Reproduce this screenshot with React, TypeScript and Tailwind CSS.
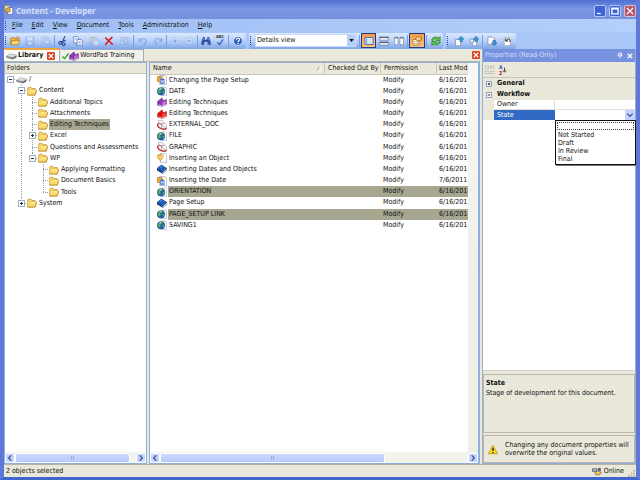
import type { ReactNode } from "react";

const UI = "font-['DejaVu_Sans_Condensed','DejaVu_Sans',Tahoma,sans-serif] text-[7px] leading-[9px] text-[#111]";

function Svg({ children, className = "h-[10px] w-[10px]", dim = false }: { children: ReactNode; className?: string; dim?: boolean }) {
  return (
    <svg viewBox="0 0 16 16" aria-hidden="true" className={`block shrink-0 ${className} ${dim ? "opacity-40" : ""}`}>
      {children}
    </svg>
  );
}

/* ---------- object icons ---------- */

function Folder() {
  return (
    <Svg>
      <path d="M1 13.5V3.5L2 2h4.5L8 4h5v3" fill="#f7d271" stroke="#b98a1c" />
      <path d="M1 14.5 4 6.5h11.5L13 14.5z" fill="#ffe48f" stroke="#c08f1e" />
      <path d="M1.5 6h11v7h-11z" fill="#fbd968" />
      <path d="M4.8 8h9" stroke="#fff8d8" />
      <path d="M1 14.5h12l2.500-7" fill="none" stroke="#b07c14" />
    </Svg>
  );
}

function Drive({ className = "h-[10px] w-[11px]" }: { className?: string }) {
  return (
    <Svg className={className}>
      <path d="M0 8 6 4.5l10 2.2v3L10 13 0 10.5z" fill="#8b8b8b" stroke="#666" strokeWidth=".6" />
      <path d="M0 8 6 4.5l10 2.2-6 3.4z" fill="#dadada" />
      <path d="M11 11.5l4-2" stroke="#333" strokeWidth="1.2" />
    </Svg>
  );
}

function WordDoc() {
  return (
    <Svg>
      <path d="M4.5.5h8l3 3v12h-11z" fill="#fff" stroke="#7a8db5" />
      <path d="M.5 2.5h8v8h-8z" fill="#e9a63c" stroke="#b77a1c" />
      <path d="M5 6h7v8H5z" fill="#3f6fd0" />
      <path d="M6 8l1.2 4L8.5 9l1.3 3L11 8" fill="none" stroke="#fff" />
    </Svg>
  );
}

function Globe() {
  return (
    <Svg>
      <path d="M8.5 1.5h5l2 2v12h-7z" fill="#fff" stroke="#8ba4c8" />
      <circle cx="6.500" cy="8.5" r="6.2" fill="#2a5cb0" stroke="#1b4b8c" strokeWidth=".6" />
      <path d="M3 5c2-3 5-3 6-2L8 6 5 7 6 10l-2 2C1.500 10 1 7.500 3 5z" fill="#58b84c" />
      <path d="M9 8l3-1c1 2-1 5-2.500 6z" fill="#49b04c" />
      <path d="M4 5l3-1.500" stroke="#d8f0e8" />
    </Svg>
  );
}

function ClosedBook({ kind }: { kind: "purple" | "red" }) {
  const face = kind === "purple" ? "#8f36b4" : "#e01414";
  const edge = kind === "purple" ? "#4e1268" : "#8d0606";
  return (
    <Svg>
      <path d="M1 7 8 1.500 10 6 15 4v8l-7 3-7-2z" fill={face} stroke={edge} strokeWidth=".8" />
      <path d="M8.500 8 14 6v5l-5.500 2.500z" fill={kind === "purple" ? "#b873d8" : "#f24a3c"} />
      <path d="M2 12.500l6 1.800 6.500-2.800" stroke="#fff" fill="none" />
    </Svg>
  );
}

function LinkedDoc() {
  return (
    <Svg>
      <path d="M2.500.5h6l3 3v9h-9z" fill="#f4f6fa" stroke="#9aa3b5" />
      <path d="M7.500 5.500h5l3 3v6h-8z" fill="#fff" stroke="#7a8498" />
      <path d="M1 6c-1 4 3 8 8 8.500h4l2-2" fill="none" stroke="#cc1f1f" strokeWidth="1.800" />
      <path d="M1 6.500C3 4 7 6 9 9" fill="none" stroke="#cc1f1f" strokeWidth="1.500" />
      <path d="M9.500 11h4" stroke="#888" />
    </Svg>
  );
}

function Shield() {
  return (
    <Svg>
      <path d="M5.500.5h7l3 3v12h-10z" fill="#fff" stroke="#8b98b8" />
      <path d="M.8 3.500 5 2l5 1.500c0 5-2 7-4.600 8.500C2.500 10.500.8 8 .8 3.500z" fill="#f3c04a" stroke="#a87a14" strokeWidth=".8" />
      <path d="M4 6l2 2 4-3" fill="none" stroke="#fff" />
    </Svg>
  );
}

function BlueBook() {
  return (
    <Svg>
      <path d="M0 7 7 1.500 16 7l-7 6z" fill="#1f5fbf" stroke="#0c2c66" strokeWidth=".8" />
      <path d="M0 7v3l9 5.500V13z" fill="#0c2c66" />
      <path d="M9 13l7-6v3l-7 5.500z" fill="#dbe8fa" stroke="#0c2c66" strokeWidth=".6" />
      <path d="M5 5.500l3-2" stroke="#7db3f5" />
    </Svg>
  );
}

/* ---------- toolbar ---------- */

function Tool({
  label,
  children,
  size = "normal",
  active,
  disabled,
}: {
  label: string;
  children: ReactNode;
  size?: "narrow" | "normal" | "wide";
  active?: boolean;
  disabled?: boolean;
}) {
  const width = size === "wide" ? "w-4" : size === "narrow" ? "w-[14px]" : "w-[15px]";
  return (
    <button
      type="button"
      aria-label={label}
      aria-pressed={active}
      disabled={disabled}
      className={`flex h-[15px] shrink-0 items-center justify-center ${width} ${
        active ? "border border-[#233a8c] bg-linear-to-b from-[#f59a4c] to-[#fbc076]" : ""
      }`}
    >
      {children}
    </button>
  );
}

function Sep() {
  return <span className="mx-px h-3 w-px shrink-0 bg-[#7a9de0]" />;
}

function Grip() {
  return (
    <span className="flex w-[3px] shrink-0 flex-col items-center gap-px">
      <i className="h-px w-px bg-[#27418f]" />
      <i className="h-px w-px bg-[#27418f]" />
      <i className="h-px w-px bg-[#27418f]" />
      <i className="h-px w-px bg-[#27418f]" />
      <i className="h-px w-px bg-[#27418f]" />
    </span>
  );
}

const strip = "flex h-4 shrink-0 items-center rounded-r-[2px] bg-linear-to-b from-[#dbe9fd] via-[#b7d0f8] to-[#7fa5e6]";

function Toolbars() {
  return (
    <div className="flex h-[17px] shrink-0 items-center gap-[3px] bg-[#a8c6f7]">
      <div className={strip}>
        <Grip />
        <Tool label="Open">
          <Svg>
            <path d="M1 13V4l1.500-1.500H6L7.500 4H12v3" fill="#f5b93c" stroke="#a06b12" />
            <path d="M1 14l3-7h12l-3.500 7z" fill="#ffd56a" stroke="#a06b12" />
            <path d="M9 3c2-3 4-2 5 0l1-1v3h-3" fill="none" stroke="#c46a14" />
          </Svg>
        </Tool>
        <Tool label="Save" size="wide" disabled>
          <Svg dim>
            <path d="M1.500 1.500h13v13h-13z" fill="#8fb0e8" stroke="#4d74ba" />
            <path d="M4 2h8v5H4zM5 10h6v4H5z" fill="#e8f1ff" />
          </Svg>
        </Tool>
        <Tool label="Save all" disabled>
          <Svg dim>
            <path d="M1.500 1.500h10v10h-10z" fill="#c4d6f4" stroke="#6b8cc8" />
            <path d="M4 4h5M4 6.500h5" stroke="#6b8cc8" />
            <circle cx="10" cy="10" r="3.500" fill="#e8f1ff" stroke="#6b8cc8" />
            <path d="M12.500 12.500l3 3" stroke="#6b8cc8" strokeWidth="2" />
          </Svg>
        </Tool>
        <Sep />
        <Tool label="Cut" size="narrow">
          <Svg>
            <path d="M11 .5 7 10M12.500 7 4 9.500" stroke="#2a4f9f" strokeWidth="1.800" />
            <circle cx="3.500" cy="11" r="2.200" fill="none" stroke="#1e3f94" strokeWidth="1.700" />
            <circle cx="9" cy="13" r="2.200" fill="none" stroke="#1e3f94" strokeWidth="1.700" />
          </Svg>
        </Tool>
        <Tool label="Copy" size="wide">
          <Svg>
            <path d="M1 1h6l2 2v8H1z" fill="#fff" stroke="#4468ae" />
            <path d="M6.500 5.500h6l3 2.500v7.500h-9z" fill="#fff" stroke="#345aa8" />
            <path d="M3 4h3M3 6h3M8.500 9h4M8.500 11h5M8.500 13h5" stroke="#6b91d8" />
          </Svg>
        </Tool>
        <Tool label="Paste" disabled>
          <Svg dim>
            <path d="M1.500 2.500h10v11h-10z" fill="#c9c4b4" stroke="#8c8c98" />
            <path d="M4 1h5v3H4z" fill="#888" />
            <path d="M7 7h8v8.500H7z" fill="#fff" stroke="#8092b8" />
          </Svg>
        </Tool>
        <Tool label="Delete" size="wide">
          <Svg>
            <path d="M2 2.500c4 3 8 7 12 11.500M13.500 1.500C8 6 5 10 2 14.500" fill="none" stroke="#d81e1e" strokeWidth="2.400" />
          </Svg>
        </Tool>
        <Tool label="Preview" disabled>
          <Svg dim>
            <path d="M.5 2.500h15v11H.5z" fill="#d5e2f6" stroke="#5a78b4" />
            <circle cx="9" cy="8" r="4" fill="#b4c9ee" stroke="#5a78b4" strokeWidth="1.500" />
            <path d="M2 5h3M2 8h2" stroke="#5a78b4" />
          </Svg>
        </Tool>
        <Sep />
        <Tool label="Undo" disabled>
          <Svg dim>
            <path d="M2 3v5h5M3 7c4-5 10-3 10 1 0 3-2 5-4 6" fill="none" stroke="#4b78c8" strokeWidth="2" />
          </Svg>
        </Tool>
        <Tool label="Redo" disabled>
          <Svg dim>
            <path d="M14 3v5H9M13 7C9 2 3 4 3 8c0 3 2 5 4 6" fill="none" stroke="#4b78c8" strokeWidth="2" />
          </Svg>
        </Tool>
        <Sep />
        <Tool label="Expand" size="narrow" disabled>
          <Svg dim>
            <path d="M3 3h10v10H3z" fill="#e5eefc" stroke="#7a9bd6" />
            <path d="M8 5v6M5 8h6" stroke="#3c62ae" strokeWidth="2" />
          </Svg>
        </Tool>
        <Tool label="Collapse" size="narrow" disabled>
          <Svg dim>
            <path d="M3 3h10v10H3z" fill="#e5eefc" stroke="#7a9bd6" />
            <path d="M5 8h6" stroke="#3c62ae" strokeWidth="2" />
          </Svg>
        </Tool>
        <Sep />
        <Tool label="Find" size="narrow">
          <Svg>
            <path d="M3 2h3v4h4V2h3l2.500 8v4h-5V9h-5v5h-5v-4z" fill="#234a9c" />
            <path d="M2 11h2M12 11h2M4 4v3M12 4v3" stroke="#9fc0f5" />
          </Svg>
        </Tool>
        <Tool label="Spelling" size="narrow">
          <span className="flex flex-col items-center">
            <span className="text-[4px] leading-[4px] font-bold text-[#333]">ABC</span>
            <Svg className="h-[7px] w-2">
              <path d="M2 7l5 6 8-12" fill="none" stroke="#2f62c4" strokeWidth="3" />
            </Svg>
          </span>
        </Tool>
        <Sep />
        <Tool label="Help" size="wide">
          <Svg>
            <circle cx="8" cy="8" r="7" fill="#2f62c8" stroke="#e8f1ff" />
            <path d="M5.500 6c0-3.500 5.500-3 5 0-.2 1.600-2.400 1.600-2.400 3.500" fill="none" stroke="#fff" strokeWidth="1.800" />
            <circle cx="8" cy="12" r="1.200" fill="#fff" />
          </Svg>
        </Tool>
      </div>

      <div className={strip}>
        <Grip />
        <div className="relative ml-[3px] flex">
          <select
            aria-label="View"
            defaultValue="Details view"
            className="h-[13px] w-[101px] appearance-none border border-[#c6dafc] bg-white pl-px"
          >
            <option>Details view</option>
          </select>
          <span className="pointer-events-none absolute top-px right-px flex h-[11px] w-2 items-center justify-center bg-[#b4cdf6]">
            <svg viewBox="0 0 6 4" className="h-[3px] w-[5px]" aria-hidden="true">
              <path d="M0 0h6L3 4z" fill="#111" />
            </svg>
          </span>
        </div>
        <span className="w-0.5" />
        <Sep />
        <Tool label="Tree pane" active>
          <Svg>
            <path d="M1.500 2.500h13v11h-13z" fill="#fff" stroke="#3f66b4" strokeWidth="1.500" />
            <path d="M2 4h3.500v9H2z" fill="#8fb2ee" />
            <path d="M7 6h6M7 8.500h6M7 11h6" stroke="#8fb2ee" />
          </Svg>
        </Tool>
        <Tool label="Split horizontally">
          <Svg>
            <path d="M1 1.500h14v5H1zM1 9.500h14v5H1z" fill="#fff" stroke="#5b6c8c" />
            <path d="M1 2.500h14M1 10.500h14" stroke="#3c4c6c" strokeWidth="1.500" />
          </Svg>
        </Tool>
        <Tool label="Split vertically">
          <Svg>
            <path d="M1 2h5.500v12H1zM9.500 2H15v12H9.500z" fill="#fff" stroke="#6c7c9c" />
            <path d="M1 3h5.500M9.500 3H15" stroke="#4c5c7c" strokeWidth="1.500" />
          </Svg>
        </Tool>
        <Sep />
        <Tool label="Properties" size="wide" active>
          <Svg>
            <path d="M1.500 5.500h10v9h-10z" fill="#fff6dc" stroke="#8a5c22" />
            <path d="M3.500 9h2M7 9h3M3.500 12h2M7 12h3" stroke="#8a5c22" />
            <path d="M5 5l4-4 6 1v4l-5 2z" fill="#f6cf90" stroke="#7a4c14" />
          </Svg>
        </Tool>
        <Sep />
        <Tool label="Refresh">
          <Svg className="h-3 w-3">
            <path d="M2 7C3 3 8 1.500 11.500 4L13.500 2v5.500H8l1.800-1.800C7.500 4.500 5.500 5 4.500 7z" fill="#5cd040" stroke="#1c7814" strokeWidth=".9" />
            <path d="M14 9c-1 4-6 5.500-9.500 3L2.500 14V8.500H8l-1.800 1.800c2.300 1.200 4.300.7 5.300-1.300z" fill="#5cd040" stroke="#1c7814" strokeWidth=".9" />
          </Svg>
        </Tool>
      </div>

      <div className={strip}>
        <Grip />
        <span className="w-0.5" />
        <Tool label="Check out">
          <Svg>
            <path d="M2.500 5.500h6l2 2v8h-8z" fill="#fff" stroke="#6c7c9c" />
            <path d="M11 .5 16 5h-2.500v4h-4V5H7z" fill="#3c9cdc" stroke="#1c5c9c" strokeWidth=".8" />
          </Svg>
        </Tool>
        <Tool label="Check out all">
          <Svg>
            <path d="M5.500 6.500h5l2 2v7h-7z" fill="#fff" stroke="#6c7c9c" />
            <path d="M1 5h6v6H3z" fill="#e8eefa" stroke="#6c7c9c" />
            <path d="M11 .5 16 5h-2.500v4h-4V5H7z" fill="#3c9cdc" stroke="#1c5c9c" strokeWidth=".8" />
          </Svg>
        </Tool>
        <Sep />
        <Tool label="Check in">
          <Svg>
            <path d="M1.500 1.500h7l3 3v9h-10z" fill="#fff" stroke="#6c7c9c" />
            <path d="M11.500 15.500 16 11h-2.500V7h-4v4H7z" fill="#3c8cdc" stroke="#1c4c9c" strokeWidth=".8" />
          </Svg>
        </Tool>
        <Tool label="Undo check out">
          <Svg>
            <path d="M3.500 2.500h7l3 3v10h-10z" fill="#fff" stroke="#8c94a4" />
            <path d="M6 4v4h4M6.500 7.500C9 3 14 5 12.500 9" fill="none" stroke="#222" strokeWidth="1.600" />
          </Svg>
        </Tool>
        <span className="w-0.5" />
      </div>
    </div>
  );
}

/* ---------- scroll bars ---------- */

function Arrow({ dir }: { dir: "left" | "right" }) {
  return (
    <button
      type="button"
      aria-label={`Scroll ${dir}`}
      className="flex h-[10px] w-[10px] shrink-0 items-center justify-center rounded-[2px] border border-white bg-[#c3d3fd]"
    >
      <svg viewBox="0 0 6 8" className="h-[6px] w-1" aria-hidden="true">
        <path d={dir === "left" ? "M5 0 1 4l4 4" : "M1 0l4 4-4 4"} fill="none" stroke="#3c5490" strokeWidth="1.800" />
      </svg>
    </button>
  );
}

function HScroll({ grow }: { grow: "most" | "some" }) {
  return (
    <div className="flex h-[11px] shrink-0 items-center bg-[#f3f2ec]">
      <Arrow dir="left" />
      <div className="flex flex-1">
        <span
          className={`flex h-[10px] items-center justify-center gap-px rounded-[2px] border border-white bg-linear-to-b from-[#cbd9fe] to-[#b7caf8] ${
            grow === "most" ? "w-[95%]" : "w-[73%]"
          }`}
        >
          <i className="h-1 w-px bg-[#93aee8]" />
          <i className="h-1 w-px bg-[#93aee8]" />
        </span>
      </div>
      <Arrow dir="right" />
    </div>
  );
}

/* ---------- folder tree ---------- */

type Guide = "blank" | "through" | "tee" | "end" | "open" | "openEnd" | "shut" | "shutEnd" | "root";

function GuideCell({ kind }: { kind: Guide }) {
  const line = { stroke: "#9a9a9a", strokeDasharray: "1 1" };
  const stops = kind === "end" || kind === "openEnd" || kind === "shutEnd";
  const vertical = kind !== "blank" && kind !== "root";
  const horizontal = vertical && kind !== "through";
  const box = ["open", "openEnd", "shut", "shutEnd", "root"].includes(kind);
  return (
    <svg className="h-full w-[11px] shrink-0" aria-hidden="true">
      {vertical && <line x1="5.500" x2="5.500" y1="0" y2={stops ? "50%" : "100%"} {...line} />}
      {(horizontal || kind === "root") && <line x1="5" x2="11" y1="5.500" y2="5.500" {...line} />}
      {box && <rect x="2.500" y="2.500" width="6" height="6" fill="#fff" stroke="#9cb0c6" />}
      {box && <path d={kind.startsWith("shut") ? "M4 5.500h3M5.500 4v3" : "M4 5.500h3"} stroke="#333" />}
    </svg>
  );
}

const folders: { name: string; guides: Guide[]; selected?: boolean; root?: boolean }[] = [
  { name: "/", guides: ["root"], root: true },
  { name: "Content", guides: ["blank", "open"] },
  { name: "Additional Topics", guides: ["blank", "through", "tee"] },
  { name: "Attachments", guides: ["blank", "through", "tee"] },
  { name: "Editing Techniques", guides: ["blank", "through", "tee"], selected: true },
  { name: "Excel", guides: ["blank", "through", "shut"] },
  { name: "Questions and Assessments", guides: ["blank", "through", "tee"] },
  { name: "WP", guides: ["blank", "through", "openEnd"] },
  { name: "Applying Formatting", guides: ["blank", "through", "blank", "tee"] },
  { name: "Document Basics", guides: ["blank", "through", "blank", "tee"] },
  { name: "Tools", guides: ["blank", "through", "blank", "end"] },
  { name: "System", guides: ["blank", "shutEnd"] },
];

function FolderPane() {
  return (
    <section className="flex w-[143px] shrink-0 flex-col border border-[#8fb0dc] bg-white">
      <h2 className="h-[11px] shrink-0 border-b border-[#c9c6b4] bg-[#e9e8da] pl-0.5 leading-[10px]">Folders</h2>
      <div role="tree" aria-label="Folders" className="flex h-[135px] flex-col">
        {folders.map((f) => (
          <div key={f.name} role="treeitem" aria-selected={!!f.selected} className="flex min-h-0 flex-1 items-center">
            {f.guides.map((g, i) => (
              <GuideCell key={i} kind={g} />
            ))}
            {f.root ? <Drive /> : <Folder />}
            <span className={`ml-px px-px leading-[11px] whitespace-nowrap ${f.selected ? "bg-[#a6a691]" : ""}`}>{f.name}</span>
          </div>
        ))}
      </div>
      <div className="flex-1" />
      <HScroll grow="most" />
    </section>
  );
}

/* ---------- document list ---------- */

const docs: { icon: ReactNode; name: string; date: string; selected?: boolean }[] = [
  { icon: <WordDoc />, name: "Changing the Page Setup", date: "6/16/201" },
  { icon: <Globe />, name: "DATE", date: "6/16/201" },
  { icon: <ClosedBook kind="purple" />, name: "Editing Techniques", date: "6/16/201" },
  { icon: <ClosedBook kind="red" />, name: "Editing Techniques", date: "6/16/201" },
  { icon: <LinkedDoc />, name: "EXTERNAL_DOC", date: "6/16/201" },
  { icon: <Globe />, name: "FILE", date: "6/16/201" },
  { icon: <LinkedDoc />, name: "GRAPHIC", date: "6/16/201" },
  { icon: <Shield />, name: "Inserting an Object", date: "6/16/201" },
  { icon: <BlueBook />, name: "Inserting Dates and Objects", date: "6/16/201" },
  { icon: <WordDoc />, name: "Inserting the Date", date: "7/6/2011" },
  { icon: <Globe />, name: "ORIENTATION", date: "6/16/201", selected: true },
  { icon: <BlueBook />, name: "Page Setup", date: "6/16/201" },
  { icon: <Globe />, name: "PAGE_SETUP LINK", date: "6/16/201", selected: true },
  { icon: <Globe />, name: "SAVING1", date: "6/16/201" },
];

function DocumentList() {
  const th = "overflow-hidden border-b border-[#c9c6b4] p-0 text-left font-normal whitespace-nowrap";
  return (
    <section className="flex min-w-0 flex-1 flex-col border border-r-2 border-[#8fb0dc] bg-white">
      <div className="flex min-h-0 flex-1">
        <div className="min-w-0 flex-1">
          <table className="h-[168px] w-full table-fixed border-collapse">
            <colgroup>
              <col />
              <col className="w-14" />
              <col className="w-14" />
              <col className="w-[31px]" />
            </colgroup>
            <thead className="bg-[#e9e8da]">
              <tr className="h-[11px] leading-[10px]">
                <th scope="col" className={th}>
                  <div className="flex items-center justify-between border-r border-[#c9c6b4] pr-0.5 pl-[3px]">
                    Name
                    <svg viewBox="0 0 6 6" className="h-[5px] w-[5px]" aria-hidden="true">
                      <path d="M0 6 3 0" stroke="#9a9786" fill="none" />
                      <path d="M3 0l3 6H0" stroke="#fff" fill="none" />
                    </svg>
                  </div>
                </th>
                <th scope="col" className={th}>
                  <div className="border-r border-[#c9c6b4] pl-[3px]">Checked Out By</div>
                </th>
                <th scope="col" className={th}>
                  <div className="border-r border-[#c9c6b4] pl-[3px]">Permission</div>
                </th>
                <th scope="col" className={th}>
                  <div className="pl-0.5">Last Mod</div>
                </th>
              </tr>
            </thead>
            <tbody>
              {docs.map((d, i) => {
                const bg = d.selected ? "bg-[#a6a691]" : "";
                return (
                  <tr key={i} className="leading-[11px] whitespace-nowrap">
                    <td className="h-px p-0">
                      <div className="flex h-full items-center pl-[7px]">
                        {d.icon}
                        <span className={`ml-px flex h-full flex-1 items-center pl-px ${bg}`}>{d.name}</span>
                      </div>
                    </td>
                    <td className={`p-0 ${bg}`} />
                    <td className={`p-0 pl-0.5 ${bg}`}>Modify</td>
                    <td className={`overflow-hidden p-0 pl-0.5 ${bg}`}>{d.date}</td>
                  </tr>
                );
              })}
            </tbody>
          </table>
        </div>
        <div className="w-[10px] shrink-0 bg-linear-to-b from-[#f8f8f6] via-[#f0efeb] to-[#efeee5]" />
      </div>
      <HScroll grow="some" />
    </section>
  );
}

/* ---------- properties ---------- */

function Toggle({ open }: { open?: boolean }) {
  return (
    <svg viewBox="0 0 7 7" className="h-[6px] w-[6px] shrink-0" aria-hidden="true">
      <path d="M.5.5h6v6h-6z" fill="#fff" stroke="#7c8ca4" />
      <path d={open ? "M2 3.500h3" : "M2 3.500h3M3.500 2v3"} stroke="#111" />
    </svg>
  );
}

function Properties() {
  return (
    <aside className="flex w-[154px] shrink-0 flex-col border border-t-0 border-[#8fb0dc] bg-[#e9e8da]">
      <header className="flex h-[13px] shrink-0 items-center bg-[#7692e0] px-0.5 text-[#d3defa]">
        <h2 className="flex-1">Properties (Read-Only)</h2>
        <button type="button" aria-label="Auto hide" className="mr-1">
          <Svg className="h-[7px] w-[6px]">
            <path d="M4 1v8M12 1v8M4 2h8M1 9h14M8 9v7M10 2v7" fill="none" stroke="#fff" strokeWidth="2" />
          </Svg>
        </button>
        <button type="button" aria-label="Close properties">
          <Svg className="h-[6px] w-[6px]">
            <path d="M2 2l12 12M14 2 2 14" stroke="#fff" strokeWidth="3.500" />
          </Svg>
        </button>
      </header>
      <div className="flex h-[15px] shrink-0 items-center gap-1 pl-0.5">
        <button type="button" aria-label="Categorized">
          <Svg>
            <path d="M1 1.500h5v4H1zM1 9.500h5v4H1z" fill="#f4f3ea" stroke="#aaa899" />
            <path d="M8 2h3M12 2h3M8 5h3M12 5h3M8 10h3M12 10h3M8 13.500h3M12 13.500h3" stroke="#aaa899" strokeWidth="1.300" />
          </Svg>
        </button>
        <button type="button" aria-label="Alphabetical" className="flex items-center">
          <span className="flex flex-col text-[5px] leading-[6px] font-bold">
            <span className="text-[#2c54b4]">A</span>
            <span className="text-[#b42c34]">Z</span>
          </span>
          <Svg className="h-[10px] w-[5px]">
            <path d="M8 0v13M2 9l6 6 6-6" fill="none" stroke="#222" strokeWidth="2.500" />
          </Svg>
        </button>
      </div>
      <div className="flex flex-1 flex-col border-t border-[#c9c6b4] bg-white">
        <h3 className="flex h-[11px] items-center gap-[5px] bg-[#e9e8da] pl-[3px] font-bold">
          <Toggle />
          General
        </h3>
        <h3 className="flex h-[11px] items-center gap-[5px] bg-[#e9e8da] pl-[3px] font-bold">
          <Toggle open />
          Workflow
        </h3>
        <div className="flex h-[10px] border-l-[11px] border-[#e9e8da]">
          <label htmlFor="owner" className="flex w-[61px] items-center border-r border-b border-[#e3e0d2] pl-[3px]">
            Owner
          </label>
          <input id="owner" readOnly className="min-w-0 flex-1 border-b border-[#e3e0d2]" />
        </div>
        <div className="flex h-[10px] border-l-[11px] border-[#e9e8da]">
          <label htmlFor="state" className="flex w-[61px] items-center bg-[#316ac5] pl-[3px] text-white">
            State
          </label>
          <div className="relative flex min-w-0 flex-1">
            <select id="state" className="min-w-0 flex-1 appearance-none bg-white" defaultValue="">
              <option value=""></option>
            </select>
            <span className="pointer-events-none absolute top-0 right-0 flex h-[10px] w-[10px] items-center justify-center rounded-[1px] bg-[#c3d3fd]">
              <svg viewBox="0 0 8 6" className="h-1 w-[6px]" aria-hidden="true">
                <path d="M0 1l4 4 4-4" fill="none" stroke="#3c5490" strokeWidth="1.800" />
              </svg>
            </span>
            <ul
              role="listbox"
              aria-label="State values"
              className="absolute top-[10px] -right-px left-0 z-10 border border-[#111] bg-white pb-px leading-2 shadow-[1px_1px_0_#777]"
            >
              <li role="option" aria-selected="true" className="m-px h-2 border border-dotted border-[#444]" />
              <li role="option" aria-selected="false" className="pl-0.5">Not Started</li>
              <li role="option" aria-selected="false" className="pl-0.5">Draft</li>
              <li role="option" aria-selected="false" className="pl-0.5">In Review</li>
              <li role="option" aria-selected="false" className="pl-0.5">Final</li>
            </ul>
          </div>
        </div>
      </div>
      <div className="h-1 shrink-0 border-t border-[#d4d1c2]" />
      <div className="h-[59px] shrink-0 border border-[#bdb6a8] px-0.5 pt-[3px]">
        <h3 className="leading-[10px] font-bold">State</h3>
        <p className="leading-[10px]">Stage of development for this document.</p>
      </div>
      <div className="mt-0.5 flex h-7 shrink-0 items-center gap-[7px] border border-[#bdb6a8] pl-1">
        <Svg className="h-[11px] w-[10px]">
          <path d="M8 1l7.500 14H.5z" fill="#ffdc1e" stroke="#a08a14" />
          <path d="M8 5v5.500M8 12v2" stroke="#111" strokeWidth="2" />
        </Svg>
        <p className="leading-2">
          Changing any document properties will
          <br />
          overwrite the original values.
        </p>
      </div>
    </aside>
  );
}

/* ---------- window ---------- */

function CaptionButton({ label, className, d }: { label: string; className: string; d: string }) {
  return (
    <button type="button" aria-label={label} className={`flex h-3 w-3 items-center justify-center rounded-[2px] border ${className}`}>
      <Svg>
        <path d={d} fill="none" stroke="#fff" strokeWidth="2.200" />
      </Svg>
    </button>
  );
}

const menus = ["File", "Edit", "View", "Document", "Tools", "Administration", "Help"];

export default function App() {
  return (
    <div
      className={`flex h-screen flex-col overflow-hidden border-x-4 border-b-[3px] border-x-[#5f78d8] border-b-[#3f66cc] bg-[#e9e8da] ${UI}`}
    >
      <header className="-mx-1 flex h-[19px] shrink-0 items-center bg-linear-to-b from-[#4f6ed2] via-[#7d99e4] to-[#7590de] px-1">
        <Svg className="h-[10px] w-[10px]">
          <path d="M1 1h8v8H1z" fill="#f4e4b4" stroke="#9c7c34" />
          <path d="M6 4h8v11H6z" fill="#fff" stroke="#44589c" />
          <path d="M3 6h7v5H3z" fill="#f0b43c" stroke="#8c6414" />
        </Svg>
        <h1 className="ml-0.5 flex-1 pt-[3px] font-['Open_Sans','Trebuchet_MS',sans-serif] text-[8px] leading-3 font-bold text-[#d4e0fb]">
          Content - Developer
        </h1>
        <div className="flex gap-[3px] pt-[2px]">
          <CaptionButton label="Minimize" className="border-[#b4c6f4] bg-[#3c62d4]" d="M3 12h6" />
          <CaptionButton label="Maximize" className="border-[#b4c6f4] bg-[#3c62d4]" d="M3 3.500h10v9H3zM3 4.500h10" />
          <CaptionButton label="Close" className="border-[#dcbcd0] bg-[#b4586c]" d="M3 3l10 10M13 3 3 13" />
        </div>
      </header>

      <nav className="flex h-[13px] shrink-0 items-center bg-linear-to-r from-[#9dbdf4] to-[#b4cffa]" aria-label="Menu bar">
        <Grip />
        <div className="flex gap-[9px] pl-[5px]">
          {menus.map((m) => (
            <button key={m} type="button">
              <span className="underline underline-offset-1">{m[0]}</span>
              {m.slice(1)}
            </button>
          ))}
        </div>
      </nav>

      <Toolbars />

      <main className="flex min-h-0 flex-1">
        <div className="flex min-w-0 flex-1 flex-col">
          <div className="flex h-[13px] shrink-0 items-end border-b border-[#b4b4a8]">
            <div role="tab" aria-selected="true" className="flex h-[13px] items-center border-t-2 border-r border-t-[#f0a43c] border-r-[#9cacc4] bg-[#fbfbf8] pr-1 pl-0.5 font-bold">
              <Drive />
              <span className="mr-1 ml-px">Library</span>
              <button type="button" aria-label="Close tab" className="flex h-2 w-2 items-center justify-center rounded-[1px] bg-[#dc4424]">
                <Svg className="h-[6px] w-[6px]">
                  <path d="M2 2l12 12M14 2 2 14" stroke="#fff" strokeWidth="3" />
                </Svg>
              </button>
            </div>
            <div role="tab" aria-selected="false" className="ml-px flex h-3 items-center border-t border-r border-[#9cacc4] bg-[#f2f2ea] pr-[9px] pl-px">
              <Svg className="h-[8px] w-[7px]">
                <path d="M1 9l5 5 9-12" fill="none" stroke="#1ca41c" strokeWidth="3" />
              </Svg>
              <ClosedBook kind="purple" />
              <span className="ml-px">WordPad Training</span>
            </div>
            <div className="flex-1" />
            <button type="button" aria-label="Close document" className="mb-0.5 flex h-2 w-2 items-center justify-center rounded-[1px] bg-[#dc4424]">
              <Svg className="h-[6px] w-[6px]">
                <path d="M2 2l12 12M14 2 2 14" stroke="#fff" strokeWidth="3" />
              </Svg>
            </button>
          </div>
          <div className="flex min-h-0 flex-1 gap-0.5">
            <FolderPane />
            <DocumentList />
          </div>
        </div>
        <span className="w-0.5 shrink-0" />
        <Properties />
      </main>

      <footer className="flex h-[13px] shrink-0 items-center border-t border-[#b4b4a8] pr-px pl-0.5">
        <span className="flex-1">2 objects selected</span>
        <Svg className="mr-0.5 h-[10px] w-[11px]">
          <path d="M1 4h8v5H1z" fill="#444" />
          <path d="M2 5h6v3H2z" fill="#8fb4e8" />
          <path d="M5 10l5-2 6 2-3 4H7z" fill="#f2cc4c" stroke="#555" />
          <path d="M10 3h5v5h-5z" fill="#666" />
        </Svg>
        <span>Online</span>
        <svg viewBox="0 0 8 8" className="ml-1 h-[7px] w-[7px] self-end" aria-hidden="true">
          <path d="M6 0h2v2H6zM3 3h2v2H3zM6 3h2v2H6zM0 6h2v2H0zM3 6h2v2H3zM6 6h2v2H6z" fill="#b8b4a0" />
        </svg>
      </footer>
    </div>
  );
}
